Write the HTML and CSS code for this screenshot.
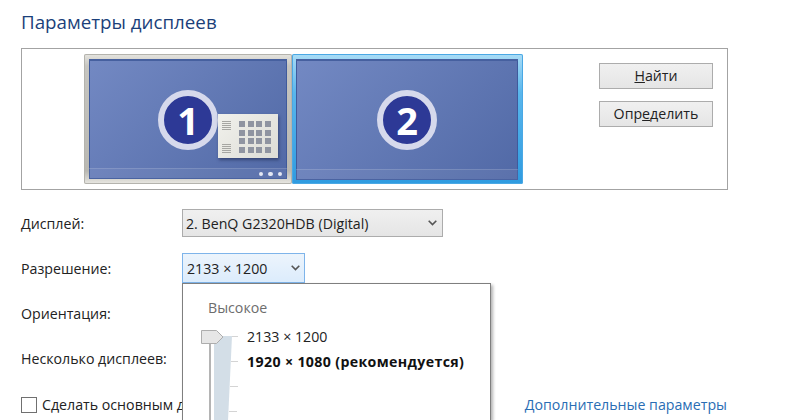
FILE: index.html
```html
<!DOCTYPE html>
<html lang="ru">
<head>
  <meta charset="UTF-8" />
  <title>Параметры дисплеев</title>
  <link rel="stylesheet" href="styles.css">
</head>
<body>

  <h1 class="title">Параметры дисплеев</h1>

  <div class="panel">
    <div class="monitors">
      <div class="monitor">
        <div class="screen">
          <span class="badge">1</span>
          <div class="calendar">
            <div class="cal-lines">
              <div class="lines"></div>
              <div class="lines"></div>
            </div>
            <div class="cal-grid">
              <i></i><i></i><i></i><i></i>
              <i></i><i></i><i></i><i></i>
              <i></i><i></i><i></i><i></i>
              <i></i><i></i><i></i><i></i>
            </div>
          </div>
          <div class="taskbar">
            <b></b><b></b><b></b>
          </div>
        </div>
      </div>
      <div class="monitor active">
        <div class="screen">
          <span class="badge">2</span>
          <div class="taskbar"></div>
        </div>
      </div>
    </div>
    <div class="actions">
      <div class="btn"><u>Н</u>айти</div>
      <div class="btn">Опр<u>е</u>делить</div>
    </div>
  </div>

  <div class="form">
    <div class="row">
      <div class="label">Дисплей:</div>
      <div class="select wide">
        <span>2. BenQ G2320HDB (Digital)</span>
        <svg class="chev" width="9" height="6" viewBox="0 0 9 6"><path d="M.7.7l3.8 3.8L8.3.7" fill="none" stroke="#555" stroke-width="1.6"/></svg>
      </div>
    </div>
    <div class="row">
      <div class="label">Разрешение:</div>
      <div class="select open">
        <span>2133 × 1200</span>
        <svg class="chev" width="9" height="6" viewBox="0 0 9 6"><path d="M.7.7l3.8 3.8L8.3.7" fill="none" stroke="#555" stroke-width="1.6"/></svg>
      </div>
    </div>
    <div class="row">
      <div class="label">Ориентация:</div>
    </div>
    <div class="row">
      <div class="label">Несколько дисплеев:</div>
    </div>
    <div class="bottom">
      <div class="check">
        <span class="box"></span>
        <span>Сделать основным дисплеем</span>
      </div>
      <a class="link" href="#">Дополнительные параметры</a>
    </div>

    <div class="popup">
      <div class="popup-head">Высокое</div>
      <div class="slider">
        <div class="rail">
          <div class="wedge"></div>
          <div class="track"></div>
          <div class="tick t1"></div>
          <div class="tick t2"></div>
          <div class="tick t3"></div>
          <div class="tick t4"></div>
          <svg class="thumb" width="23" height="14" viewBox="0 0 23 14"><path d="M.5.5h15l6.5 6.5-6.5 6.5H.5z" fill="#e6e6e6" stroke="#adadad"/></svg>
        </div>
        <div class="options">
          <div class="option">2133 × 1200</div>
          <div class="option rec">1920 × 1080 (рекомендуется)</div>
        </div>
      </div>
    </div>
  </div>

</body>
</html>
```

FILE: styles.css
```css
html, body {
  height: 420px;
  overflow: hidden;
}
body {
  margin: 0;
  font-family: "Open Sans", "Noto Sans", sans-serif;
  font-size: 14.2px;
  color: #222;
  background-color: #fff;
}
.title {
  margin: 0;
  padding: 9px 0 0 21px;
  height: 48px;
  box-sizing: border-box;
  font-size: 18.75px;
  font-weight: 400;
  line-height: 25px;
  color: #1b3f7a;
}
.panel {
  display: flex;
  margin-left: 21px;
  width: 707px;
  height: 142px;
  box-sizing: border-box;
  border: 1px solid #a3a3a3;
}
.monitors {
  display: flex;
  margin: 5px 0 0 62px;
  height: 130px;
}
.monitor {
  width: 208px;
  height: 130px;
  box-sizing: border-box;
  padding: 5px 5px 5px 5px;
  border-radius: 2px;
  background: linear-gradient(#e6e5e0, #c6c5c0 12px, #b9b8b2 90%, #e9e8e3);
  box-shadow: inset 0 0 0 1px #b4b3ad;
}
.monitor.active {
  width: 231px;
  padding: 5px 5px 4px 4px;
  background: linear-gradient(#a9dcf6, #59b6ec 30%, #2f9be0);
  box-shadow: inset 0 0 0 1px #4aa8e4;
}
.screen {
  position: relative;
  height: 100%;
  overflow: hidden;
  background: linear-gradient(135deg, #7389c3, #5169a6);
  box-shadow: inset 0 2px 0 #46609f, inset 0 0 0 1px #3f5a9c;
}
.badge {
  position: absolute;
  top: 31px;
  left: 69px;
  width: 48px;
  height: 48px;
  border: 6px solid #d6d9ec;
  border-radius: 50%;
  background-color: #2d3996;
  color: #fff;
  font-family: "Open Sans", sans-serif;
  font-size: 38px;
  font-weight: 700;
  line-height: 48px;
  text-align: center;
}
.active .badge {
  left: 81px;
}
.calendar {
  position: absolute;
  left: 129px;
  top: 55px;
  width: 60px;
  height: 44px;
  display: flex;
  box-sizing: border-box;
  padding: 7px 7px 5px 4px;
  justify-content: space-between;
  background: linear-gradient(135deg, #f1f1ec, #dcdcd6);
  box-shadow: 1px 2px 3px rgba(30, 40, 80, 0.6);
}
.cal-lines {
  display: flex;
  flex-direction: column;
  justify-content: space-between;
}
.lines {
  width: 9px;
  height: 9px;
  background: repeating-linear-gradient(#a6a6a2 0 1px, transparent 1px 2px);
}
.cal-grid {
  display: grid;
  grid-template-columns: repeat(4, 6px);
  grid-auto-rows: 6px;
  gap: 2.6px;
}
.cal-grid i {
  background-color: #8f94a1;
}
.taskbar {
  position: absolute;
  left: 0;
  right: 0;
  bottom: 0;
  height: 10px;
  display: flex;
  justify-content: flex-end;
  align-items: center;
  gap: 5px;
  padding-right: 5px;
  background-color: rgba(255, 255, 255, 0.06);
  border-top: 1px solid rgba(255, 255, 255, 0.14);
}
.taskbar b {
  width: 4.5px;
  height: 4.5px;
  border-radius: 50%;
  background-color: #e4e8f4;
}
.actions {
  display: flex;
  flex-direction: column;
  gap: 12px;
  margin: 14px 0 0 76px;
}
.btn {
  width: 114px;
  height: 26px;
  box-sizing: border-box;
  border: 1px solid #acacac;
  background: linear-gradient(#f0f0f0, #e5e5e5);
  line-height: 24px;
  text-align: center;
}
.form {
  position: relative;
  padding: 18px 0 0 21px;
}
.row {
  display: flex;
  align-items: center;
  height: 30px;
  margin-bottom: 15px;
}
.label {
  width: 161px;
  padding-top: 1px;
}
.select {
  display: flex;
  align-items: center;
  justify-content: space-between;
  box-sizing: border-box;
  height: 28px;
  width: 261px;
  padding: 0 5px 0 3px;
  border: 1px solid #acacac;
  background: linear-gradient(#f0f0f0, #e5e5e5);
}
.select.open {
  width: 123px;
  height: 30px;
  padding: 0 4px 0 4px;
  border-color: #7eb4ea;
  background: linear-gradient(#ecf4fc, #dcecfc);
}
.bottom {
  display: flex;
  justify-content: space-between;
  align-items: center;
  width: 706px;
  margin-top: 22px;
}
.check {
  display: flex;
  align-items: center;
  gap: 5px;
}
.box {
  width: 14px;
  height: 14px;
  border: 1px solid #707070;
}
.link {
  color: #2a6db4;
  text-decoration: none;
}
.popup {
  position: absolute;
  left: 182px;
  top: 93px;
  width: 309px;
  height: 137px;
  box-sizing: border-box;
  border: 1px solid #7f7f7f;
  border-bottom: none;
  background-color: #fff;
  box-shadow: 2px 2px 3px rgba(0, 0, 0, 0.3);
}
.popup-head {
  padding: 14px 0 0 25px;
  color: #6d6d6d;
  line-height: 20px;
}
.slider {
  display: flex;
  margin: 12px 0 0 18px;
}
.rail {
  position: relative;
  width: 46px;
  height: 90px;
}
.wedge {
  position: absolute;
  left: 13px;
  top: 6px;
  width: 18px;
  height: 84px;
  background-color: #d3dee7;
  clip-path: polygon(0 0, 100% 0, 78% 100%, 0 100%);
}
.track {
  position: absolute;
  left: 8px;
  top: 10px;
  width: 2px;
  height: 80px;
  background-color: #b4b4b4;
}
.tick {
  position: absolute;
  height: 1px;
  background-color: #d4d4d4;
}
.t1 {
  left: 31px;
  top: 6px;
  width: 6px;
}
.t2 {
  left: 30px;
  top: 31px;
  width: 7px;
}
.t3 {
  left: 29px;
  top: 56px;
  width: 8px;
}
.t4 {
  left: 28px;
  top: 81px;
  width: 8px;
}
.thumb {
  position: absolute;
  left: 0;
  top: 0;
}
.option {
  height: 25px;
  line-height: 14px;
}
.option.rec {
  font-weight: 700;
  color: #111;
  letter-spacing: 0.35px;
}
```
